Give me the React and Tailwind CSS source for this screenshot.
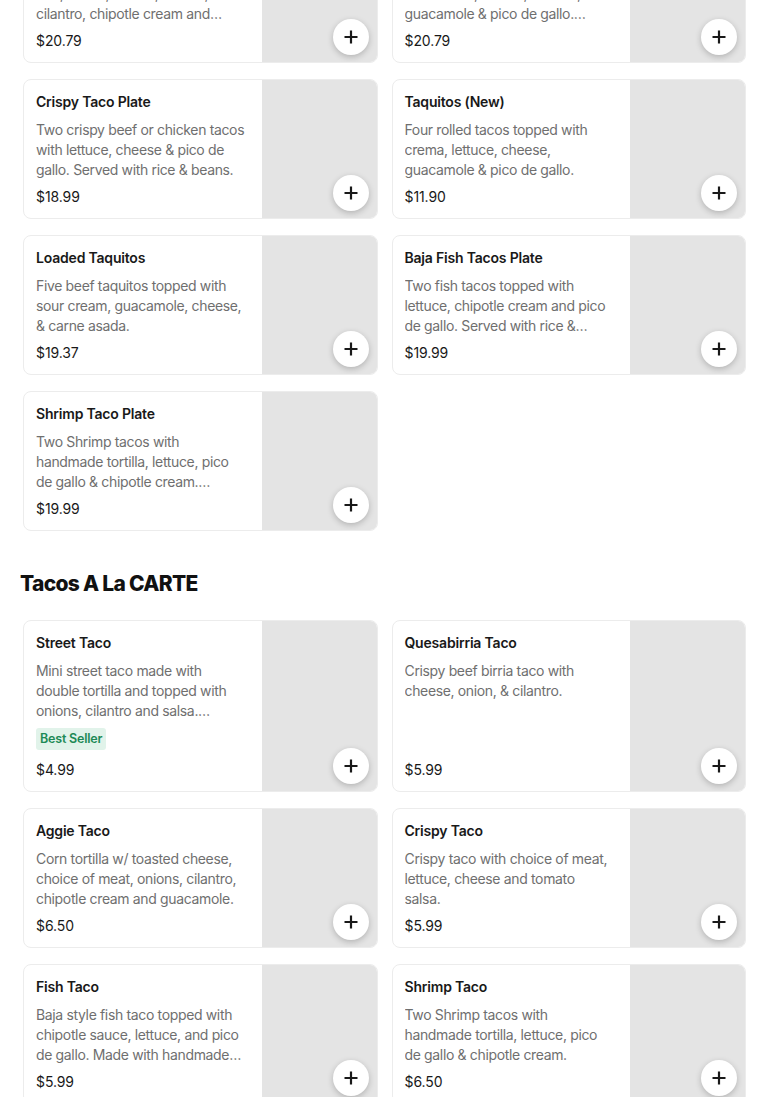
import React from "react";

const plates = [
  {
    name: "Carne Asada Plate",
    desc: "Three carne asada tacos with rice, beans, onions, lettuce, cilantro, chipotle cream and handmade tortillas.",
    price: "$20.79",
  },
  {
    name: "Enchilada Plate",
    desc: "Two chicken enchiladas topped with crema, lettuce, cheese, guacamole & pico de gallo. Served with rice & beans.",
    price: "$20.79",
  },
  {
    name: "Crispy Taco Plate",
    desc: "Two crispy beef or chicken tacos with lettuce, cheese & pico de gallo. Served with rice & beans.",
    price: "$18.99",
  },
  {
    name: "Taquitos (New)",
    desc: "Four rolled tacos topped with crema, lettuce, cheese, guacamole & pico de gallo.",
    price: "$11.90",
  },
  {
    name: "Loaded Taquitos",
    desc: "Five beef taquitos topped with sour cream, guacamole, cheese, & carne asada.",
    price: "$19.37",
  },
  {
    name: "Baja Fish Tacos Plate",
    desc: "Two fish tacos topped with lettuce, chipotle cream and pico de gallo. Served with rice & beans.",
    price: "$19.99",
  },
  {
    name: "Shrimp Taco Plate",
    desc: "Two Shrimp tacos with handmade tortilla, lettuce, pico de gallo & chipotle cream. Served with rice & beans.",
    price: "$19.99",
  },
];

const tacos = [
  {
    name: "Street Taco",
    desc: "Mini street taco made with double tortilla and topped with onions, cilantro and salsa. Choice of protein.",
    price: "$4.99",
    badge: "Best Seller",
  },
  {
    name: "Quesabirria Taco",
    desc: "Crispy beef birria taco with cheese, onion, & cilantro.",
    price: "$5.99",
  },
  {
    name: "Aggie Taco",
    desc: "Corn tortilla w/ toasted cheese, choice of meat, onions, cilantro, chipotle cream and guacamole.",
    price: "$6.50",
  },
  {
    name: "Crispy Taco",
    desc: "Crispy taco with choice of meat, lettuce, cheese and tomato salsa.",
    price: "$5.99",
  },
  {
    name: "Fish Taco",
    desc: "Baja style fish taco topped with chipotle sauce, lettuce, and pico de gallo. Made with handmade tortilla.",
    price: "$5.99",
  },
  {
    name: "Shrimp Taco",
    desc: "Two Shrimp tacos with handmade tortilla, lettuce, pico de gallo & chipotle cream.",
    price: "$6.50",
  },
];

const PlusIcon = () => (
  <svg width="16" height="16" viewBox="0 0 16 16" fill="none">
    <path d="M8 1.5v13M1.5 8h13" stroke="#191919" strokeWidth="2.2" />
  </svg>
);

const ItemCard = ({ item }) => (
  <div className="flex h-full min-h-[140px] rounded-[8px] border border-[#ececec] bg-white overflow-hidden">
    <div className="flex flex-1 flex-col pl-[12px] pr-[17px] pt-[11px] pb-[11px] min-w-0">
      <div className="text-[14px] leading-[22px] font-semibold text-[#191919] tracking-[-0.2px] whitespace-nowrap">
        {item.name}
      </div>
      <div className="mt-[7px] text-[14px] leading-[20px] text-[#6f6f6f] tracking-[-0.35px] line-clamp-3">
        {item.desc}
      </div>
      {item.badge && (
        <div className="mt-[4px] mb-[4px]">
          <span className="inline-block rounded-[3px] bg-[#e1f3ea] px-[4px] text-[12.5px] leading-[22px] font-semibold text-[#1d8a56] tracking-[-0.2px]">
            {item.badge}
          </span>
        </div>
      )}
      <div className="mt-auto pt-[6px] text-[14px] leading-[20px] text-[#191919] tracking-[-0.1px]">
        {item.price}
      </div>
    </div>
    <div className="relative w-[115px] shrink-0 bg-[#e4e4e4]">
      <button className="absolute right-[8px] bottom-[7px] flex h-[36px] w-[36px] items-center justify-center rounded-full bg-white shadow-[0_2px_6px_rgba(0,0,0,0.22)]">
        <PlusIcon />
      </button>
    </div>
  </div>
);

export default function App() {
  return (
    <div
      className="h-[1097px] w-full overflow-hidden bg-white"
      style={{ fontFamily: "Inter, 'Liberation Sans', sans-serif" }}
    >
      <div className="-mt-[77px]">
        <div className="grid grid-cols-2 gap-x-[14px] gap-y-[16px] pl-[23px] pr-[24px]">
          {plates.map((p) => (
            <ItemCard key={p.name} item={p} />
          ))}
        </div>

        <h2 className="mt-[39px] mb-[22px] pl-[20px] text-[21px] leading-[28px] font-extrabold text-[#111] tracking-[-0.7px]">
          Tacos A La CARTE
        </h2>

        <div className="grid grid-cols-2 gap-x-[14px] gap-y-[16px] pl-[23px] pr-[24px]">
          {tacos.map((t) => (
            <ItemCard key={t.name} item={t} />
          ))}
        </div>
      </div>
    </div>
  );
}
